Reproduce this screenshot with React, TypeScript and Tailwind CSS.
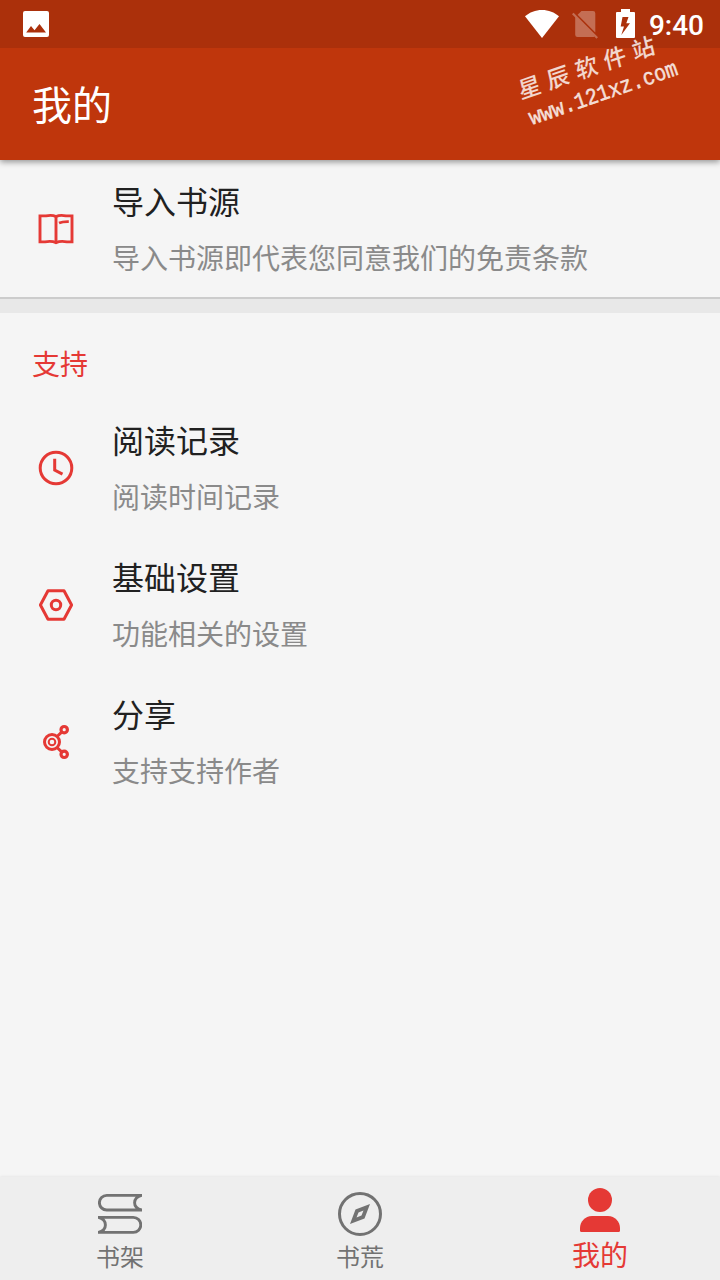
import React from "react";

const ImageIcon = () => (
  <svg width="26" height="26" viewBox="0 0 26 26">
    <path
      fillRule="evenodd"
      fill="#fff"
      d="M2 0h22a2 2 0 0 1 2 2v22a2 2 0 0 1-2 2H2a2 2 0 0 1-2-2V2a2 2 0 0 1 2-2zM3.200 21.500h19.800L16.500 13l-5 6.200L8 15z"
    />
  </svg>
);

const WifiIcon = () => (
  <svg width="34" height="28" viewBox="0 0 34 28">
    <path fill="#fff" d="M17 28L0 6.300C4.500 2.400 10.500 0 17 0s12.500 2.400 17 6.300z" />
  </svg>
);

const NoSimIcon = () => (
  <svg width="26" height="28" viewBox="0 0 26 28">
    <path
      fill="#fff"
      fillOpacity="0.3"
      d="M9.500 0H21a2.300 2.300 0 0 1 2.300 2.300V21.500L5.600 3.800zM3.200 6.200L22.300 25.400a2 2 0 0 1-1.300.6H5.500a2.300 2.300 0 0 1-2.300-2.300z"
    />
    <path stroke="#fff" strokeOpacity="0.3" strokeWidth="2.200" d="M.8 2.500L25.200 27" />
  </svg>
);

const BatteryIcon = () => (
  <svg width="19" height="29" viewBox="0 0 19 29">
    <path
      fillRule="evenodd"
      fill="#fff"
      d="M5 0h9v3h4a1 1 0 0 1 1 1v24a1 1 0 0 1-1 1H1a1 1 0 0 1-1-1V4a1 1 0 0 1 1-1h4zM6.500 8L4.700 17.600H8L5.300 26 14 14.200H10.300L12.500 8z"
    />
  </svg>
);

const BookIcon = () => (
  <svg width="36" height="36" viewBox="0 0 36 36" fill="none" stroke="#e53935" strokeWidth="2.900">
    <path d="M18 5.600C14.500 3.800 11 4.200 8 4.900H2v26h5c4-.8 7.500-.9 11 .8 3.500-1.700 7-1.600 11-.8h5v-26h-6c-3-.7-6.500-1.100-10 .7zM18 5.500v26" />
    <path d="M21 12c3-1.300 6-1.500 9.800-1.400" />
  </svg>
);

const ClockIcon = () => (
  <svg width="36" height="36" viewBox="0 0 36 36" fill="none" stroke="#e53935" strokeWidth="3">
    <circle cx="18" cy="18" r="15.800" />
    <path d="M16.700 8.800v11.300l7.800 4" />
  </svg>
);

const SettingsIcon = () => (
  <svg width="36" height="36" viewBox="0 0 36 36" fill="none" stroke="#e53935" strokeWidth="3">
    <path strokeLinejoin="round" d="M10 3.700h16L33.600 18 26 32.300H10L2.400 18z" />
    <circle cx="18" cy="18" r="4.700" />
  </svg>
);

const ShareIcon = () => (
  <svg width="36" height="36" viewBox="0 0 36 36" fill="none" stroke="#e53935">
    <circle cx="14" cy="18" r="7.500" strokeWidth="3" />
    <circle cx="14" cy="18" r="3.300" strokeWidth="2" />
    <circle cx="26.200" cy="5.700" r="3.200" strokeWidth="3.200" />
    <circle cx="26.200" cy="30.300" r="3.200" strokeWidth="3.200" />
    <path strokeWidth="3" d="M19 12.500l5-4.700M19 23.500l5 4.700" />
  </svg>
);

const ShelfIcon = () => (
  <svg width="44" height="44" viewBox="0 0 44 44" fill="none" stroke="#727272" strokeWidth="2.900">
    <path d="M44 3.400H8.700a7.300 7.300 0 0 0 0 14.600H44M43.500 3.400C34.300 6 34.300 15.400 43.500 18" />
    <path d="M0 25.400h35.300a7.500 7.500 0 0 1 0 15H0M.5 25.400c9.200 2.600 9.200 12.400 0 15" />
  </svg>
);

const CompassIcon = () => (
  <svg width="44" height="44" viewBox="0 0 44 44">
    <circle cx="22" cy="22" r="20.500" fill="none" stroke="#727272" strokeWidth="3" />
    <path
      fillRule="evenodd"
      fill="#727272"
      d="M32 12L26.500 26.500 12 32l5.500-14.500zM20.500 20.500l-2 5 5-2 2-5z"
    />
  </svg>
);

const UserIcon = () => (
  <svg width="44" height="44" viewBox="0 0 44 44" fill="#e53935">
    <circle cx="22" cy="12" r="12" />
    <path d="M14 28h16c7 0 12 6 12 12v2.500a1.500 1.500 0 0 1-1.500 1.500h-37a1.500 1.500 0 0 1-1.500-1.500V40c0-6 5-12 12-12z" />
  </svg>
);

const supportItems = [
  { icon: <ClockIcon />, title: "阅读记录", desc: "阅读时间记录" },
  { icon: <SettingsIcon />, title: "基础设置", desc: "功能相关的设置" },
  { icon: <ShareIcon />, title: "分享", desc: "支持支持作者" },
];

const Item = ({ icon, title, desc }: { icon: React.ReactNode; title: string; desc: string }) => (
  <div className="flex h-[137px] items-center pl-[38px]">
    {icon}
    <div className="flex flex-col gap-[9px] pl-[38px]">
      <p className="text-[32px] leading-[48px] text-[#212121]">{title}</p>
      <p className="text-[28px] leading-[48px] text-[#8a8a8a]">{desc}</p>
    </div>
  </div>
);

const App = () => {
  return (
    <div className="relative flex h-[1280px] w-[720px] flex-col overflow-hidden bg-[#f5f5f5] font-['Noto_Sans_CJK_SC',sans-serif]">
      <header className="z-10 bg-[#bf360c] shadow-[0_2px_6px_rgba(0,0,0,0.4)]">
        <div className="flex h-12 items-start bg-[#ab300b] pl-[23px] pr-4">
          <div className="pt-[11px]">
            <ImageIcon />
          </div>
          <div className="ml-auto flex items-start">
            <div className="pt-[10px]">
              <WifiIcon />
            </div>
            <div className="pl-[13px] pt-[11px]">
              <NoSimIcon />
            </div>
            <div className="pl-[18px] pt-[9px]">
              <BatteryIcon />
            </div>
            <span className="pl-[14px] pt-[2px] font-['Roboto',sans-serif] text-[28px] font-medium leading-[48px] text-white">
              9:40
            </span>
          </div>
        </div>
        <div className="flex h-28 items-center pb-[2px] pl-8">
          <h1 className="text-[40px] leading-[56px] text-white">我的</h1>
        </div>
      </header>

      <main className="flex-1">
        <Item icon={<BookIcon />} title="导入书源" desc="导入书源即代表您同意我们的免责条款" />
        <div className="h-4 border-t-2 border-[#cccccc] bg-[#e8e8e8]"></div>
        <p className="h-[86px] pl-8 pt-[26px] text-[28px] leading-[48px] text-[#e53935]">支持</p>
        {supportItems.map((item) => (
          <Item key={item.title} {...item} />
        ))}
      </main>

      <nav className="grid h-[103px] grid-cols-3 bg-[#eeeeee] shadow-[0_0_3px_rgba(0,0,0,0.1)]">
        <div className="flex flex-col items-center pt-[15px]">
          <ShelfIcon />
          <span className="pt-1 text-[24px] leading-[32px] text-[#727272]">书架</span>
        </div>
        <div className="flex flex-col items-center pt-[15px]">
          <CompassIcon />
          <span className="pt-1 text-[24px] leading-[32px] text-[#727272]">书荒</span>
        </div>
        <div className="flex flex-col items-center pt-[11px]">
          <UserIcon />
          <span className="pt-1 text-[28px] leading-[36px] text-[#e53935]">我的</span>
        </div>
      </nav>

      {/* site watermark */}
      <div className="absolute left-[508px] top-[47px] z-20 flex w-[180px] -rotate-[19deg] flex-col items-center text-white/80">
        <span className="-ml-[8px] -skew-x-6 text-[23px] font-medium leading-[32px] tracking-[7px]">星辰软件站</span>
        <span className="scale-y-115 pt-[2px] font-['Liberation_Mono',monospace] text-[20px] leading-[28px] [-webkit-text-stroke:0.4px]">
          www.121xz.com
        </span>
      </div>
    </div>
  );
};

export default App;
